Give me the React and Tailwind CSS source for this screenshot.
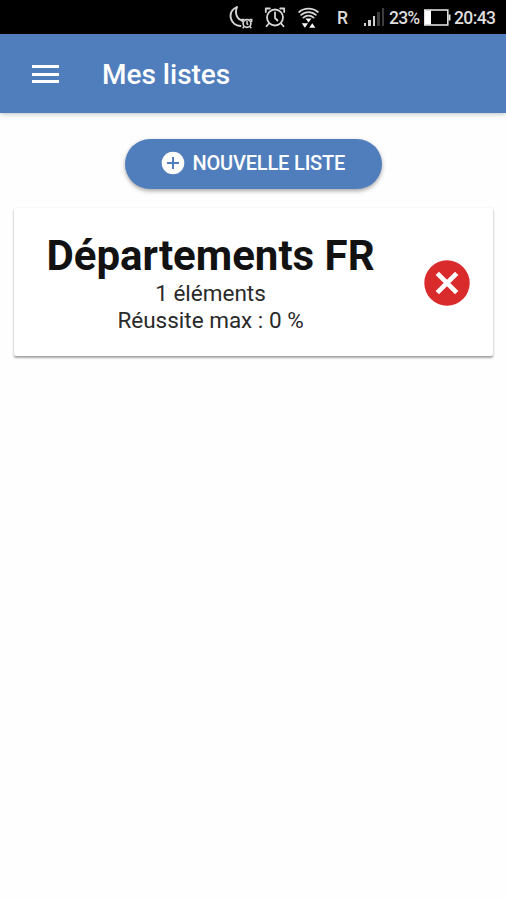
import { clsx } from "clsx";

function MoonAlarmIcon() {
  return (
    <svg width="24" height="24" viewBox="0 0 24 24" fill="none" stroke="#d6d6d6">
      <path
        d="M8 2C3.500 4 1 8 1.700 12.500c.8 5 4.800 8.500 9.800 8.500M8 2C5.500 8.500 8 14.500 13.500 15.500"
        strokeWidth="1.900"
        strokeLinecap="round"
      />
      <circle cx="18" cy="18.500" r="3.900" strokeWidth="1.700" />
      <path
        d="M18 16v2.800l1.300.8M13.300 17v-2.500h2.200M22.700 17v-2.500h-2.200M15 21.500l-1.300 1.800M21 21.500l1.300 1.800"
        strokeWidth="1.500"
      />
    </svg>
  );
}

function AlarmIcon() {
  return (
    <svg width="22" height="22" viewBox="0 0 22 22" fill="none" stroke="#d6d6d6">
      <circle cx="11" cy="11.500" r="8" strokeWidth="1.800" />
      <path
        d="M11 6.500v5.500l2.500 2.500M1.800 6V2.500h4M20.200 6V2.500h-4M4.800 17.500l-2.300 2.800M17.200 17.500l2.300 2.800"
        strokeWidth="1.800"
        strokeLinecap="round"
        strokeLinejoin="round"
      />
    </svg>
  );
}

function WifiIcon() {
  return (
    <svg width="22" height="22" viewBox="0 0 22 22" fill="none" stroke="#d6d6d6">
      <path
        d="M1.200 5C6 .4 15 .4 19.800 5M3.200 7.900c4-3.800 10.600-3.800 14.600 0M5.400 10.600c2.900-2.700 7.300-2.700 10.200 0"
        strokeWidth="1.800"
        strokeLinecap="round"
      />
      <path
        d="M7.500 11.500h6l-3 4zM3.800 16.300h6.200l-3.100 4.500zM11.200 20.800h6.200l-3.100-4.500z"
        fill="#fff"
        stroke="none"
      />
    </svg>
  );
}

function BatteryIcon() {
  return (
    <svg width="27" height="17" viewBox="0 0 27 17" fill="none">
      <rect x="0.800" y="1" width="23" height="15" stroke="#dedede" strokeWidth="1.600" />
      <rect x="1" y="1.500" width="6" height="14" fill="#fff" />
      <rect x="24.500" y="5.500" width="2" height="6" fill="#dedede" />
    </svg>
  );
}

const signalBars = [
  { height: "h-[3px]", active: true },
  { height: "h-[6px]", active: true },
  { height: "h-[10px]", active: true },
  { height: "h-[14px]", active: false },
  { height: "h-[18px]", active: false },
];

function StatusBar() {
  return (
    <div className="flex h-[34px] items-center bg-black pl-[229px] text-[17.500px] leading-none text-[#dedede]">
      <MoonAlarmIcon />
      <div className="ml-[11px]">
        <AlarmIcon />
      </div>
      <div className="ml-[12px] mt-[2px]">
        <WifiIcon />
      </div>
      <span className="ml-[17px] mt-[3px] w-[12px] font-medium">R</span>
      <div className="ml-[15px] flex h-[18px] w-[20px] items-end gap-[2px]">
        {signalBars.map(({ height, active }) => (
          <div
            key={height}
            className={clsx("w-[2.400px]", height, active ? "bg-[#d0d0d0]" : "bg-[#3c3c3c]")}
          />
        ))}
      </div>
      <span className="ml-[5px] mt-[3px] w-[35px] whitespace-nowrap font-medium tracking-[-0.800px]">
        23%
      </span>
      <BatteryIcon />
      <span className="ml-[3px] mt-[3px] whitespace-nowrap font-medium tracking-[-0.600px]">
        20:43
      </span>
    </div>
  );
}

function Header() {
  return (
    <header className="flex h-[78.500px] items-center bg-[#507ebc] pl-8 pt-[2px] text-white shadow-[0_1px_5px_rgba(0,0,0,0.25)]">
      <button className="flex w-[27px] flex-col gap-[4.500px]" aria-label="Menu">
        <span className="h-[3px] w-full bg-white" />
        <span className="h-[3px] w-full bg-white" />
        <span className="h-[3px] w-full bg-white" />
      </button>
      <h1 className="ml-[43px] mt-[2px] text-[28px] font-medium leading-none">Mes listes</h1>
    </header>
  );
}

function NewListButton() {
  return (
    <button className="mx-auto flex h-[50px] w-[257px] items-center rounded-full bg-[#507ebc] pb-[2px] pl-[36px] text-white shadow-[0_2px_4px_rgba(0,0,0,0.35)]">
      <svg width="24" height="24" viewBox="0 0 24 24">
        <circle cx="12" cy="12" r="11.300" fill="#fff" />
        <path d="M12 6v12M6 12h12" stroke="#507ebc" strokeWidth="2" />
      </svg>
      <span className="ml-[8px] whitespace-nowrap text-[20px] font-medium tracking-[-0.180px]">
        NOUVELLE LISTE
      </span>
    </button>
  );
}

function ListCard({ name, count, score }) {
  return (
    <div className="ml-[14px] flex h-[148px] w-[479px] items-center rounded-[2px] bg-white shadow-[0_2px_2px_rgba(0,0,0,0.28),0_1px_3px_rgba(0,0,0,0.16)]">
      <div className="w-[393px] pt-[2px] text-center text-[22.500px] leading-[27px] text-[#2a2a2a]">
        <h2 className="whitespace-nowrap text-[42px] font-bold leading-[48px] text-[#121212]">
          {name}
        </h2>
        <p>{count} éléments</p>
        <p>Réussite max : {score} %</p>
      </div>
      <button className="ml-[17px] mt-[2px]" aria-label="Supprimer">
        <svg width="46" height="46" viewBox="0 0 46 46">
          <circle cx="23" cy="23" r="22.700" fill="#d92b2b" />
          <path
            d="M13.300 13.300l19.400 19.400M32.700 13.300l-19.400 19.400"
            stroke="#fff"
            strokeWidth="4.700"
          />
        </svg>
      </button>
    </div>
  );
}

export default function App() {
  return (
    <div className="min-h-screen bg-[#fefefe] font-['Roboto',sans-serif]">
      <StatusBar />
      <Header />
      <main className="flex flex-col gap-[19px] pt-[26.500px]">
        <NewListButton />
        <ListCard name="Départements FR" count={1} score={0} />
      </main>
    </div>
  );
}
